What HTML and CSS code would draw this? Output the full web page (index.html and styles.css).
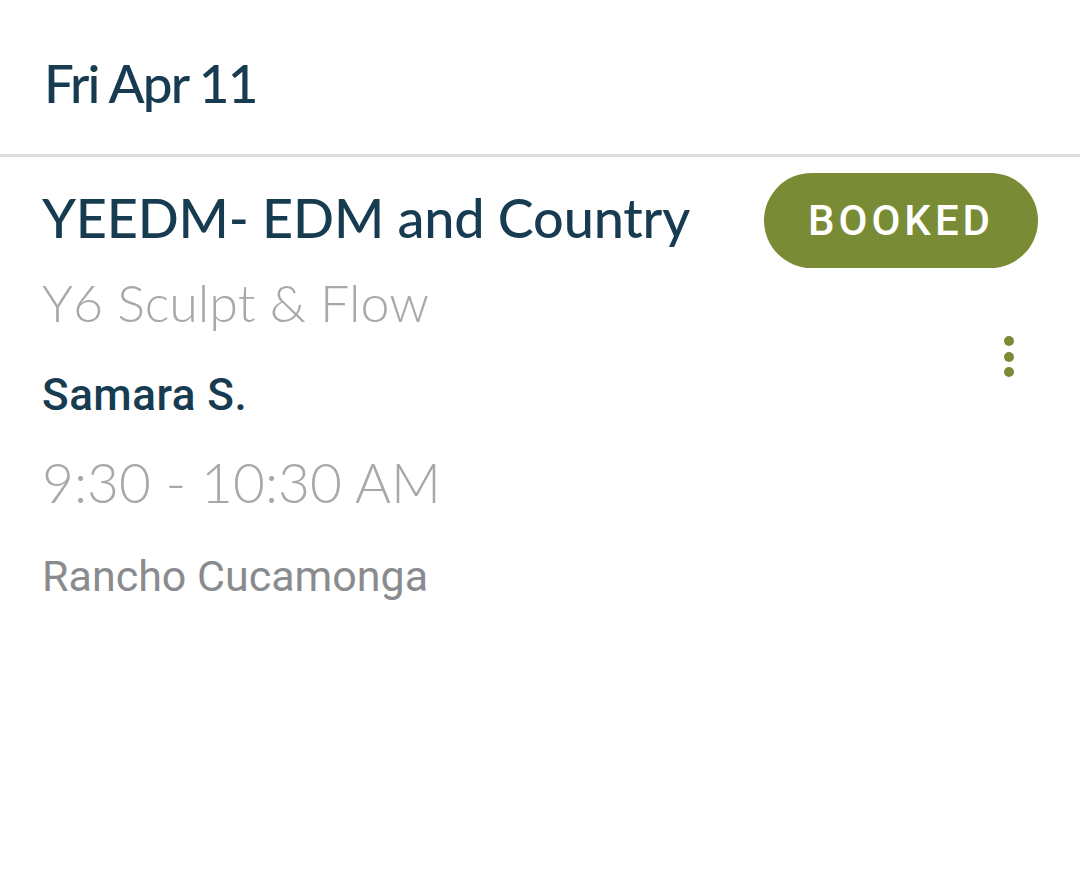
FILE: index.html
```html
<!DOCTYPE html>
<html>
<head>
<meta charset="utf-8">
<link rel="stylesheet" href="styles.css">
</head>
<body>
<header class="day-header">
  <h1 class="day-title">Fri Apr 11</h1>
</header>
<section class="class-card">
  <div class="card-main">
    <h2 class="class-name">YEEDM- EDM and Country</h2>
    <div class="class-type">Y6 Sculpt &amp; Flow</div>
    <div class="instructor">Samara S.</div>
    <div class="time">9:30 - 10:30 AM</div>
    <div class="location">Rancho Cucamonga</div>
  </div>
  <div class="card-side">
    <div class="badge">BOOKED</div>
    <div class="kebab" aria-label="More options">
      <span class="dot"></span><span class="dot"></span><span class="dot"></span>
    </div>
  </div>
</section>
</body>
</html>
```
FILE: styles.css
```css
html, body {
  margin: 0;
  padding: 0;
  background: #ffffff;
}
body {
  width: 1080px;
  height: 886px;
  overflow: hidden;
  font-family: "Lato", "Noto Sans", sans-serif;
}
.day-header {
  height: 157px;
  border-bottom: 3px solid #dedede;
  box-sizing: border-box;
  padding: 53px 0 0 44px;
}
.day-title {
  margin: 0;
  font-family: "Lato", sans-serif;
  font-weight: 500;
  font-size: 53px;
  line-height: 60px;
  color: #173b50;
  letter-spacing: -1.8px;
}
.class-card {
  display: flex;
  justify-content: space-between;
  padding: 29px 42px 0 42px;
}
.card-main {
  display: flex;
  flex-direction: column;
}
.class-name {
  margin: 0;
  font-family: "Lato", sans-serif;
  font-weight: 500;
  font-size: 54px;
  line-height: 64px;
  color: #173b50;
  letter-spacing: -0.2px;
}
.class-type {
  font-family: "Lato", sans-serif;
  font-weight: 300;
  font-size: 52px;
  line-height: 64px;
  margin-top: 20px;
  color: #a7a8ab;
}
.instructor {
  font-family: "Roboto", sans-serif;
  font-weight: 500;
  font-size: 44px;
  line-height: 50px;
  margin-top: 36px;
  color: #173b50;
  letter-spacing: 0.5px;
}
.time {
  font-family: "Lato", sans-serif;
  font-weight: 300;
  font-size: 55px;
  line-height: 64px;
  margin-top: 30px;
  color: #a7a8ab;
}
.location {
  font-family: "Roboto", sans-serif;
  font-weight: 400;
  font-size: 43px;
  line-height: 50px;
  margin-top: 37px;
  color: #898b8e;
}
.card-side {
  display: flex;
  flex-direction: column;
  align-items: flex-end;
}
.badge {
  width: 274px;
  height: 95px;
  border-radius: 48px;
  background: #7a8b35;
  color: #ffffff;
  font-family: "Roboto", sans-serif;
  font-weight: 500;
  font-size: 42px;
  letter-spacing: 4px;
  display: flex;
  align-items: center;
  justify-content: center;
  margin-top: -13px;
}
.kebab {
  display: flex;
  flex-direction: column;
  gap: 5.5px;
  margin-top: 68px;
  margin-right: 24px;
}
.dot {
  width: 10px;
  height: 10px;
  border-radius: 50%;
  background: #7a8b35;
}
```
